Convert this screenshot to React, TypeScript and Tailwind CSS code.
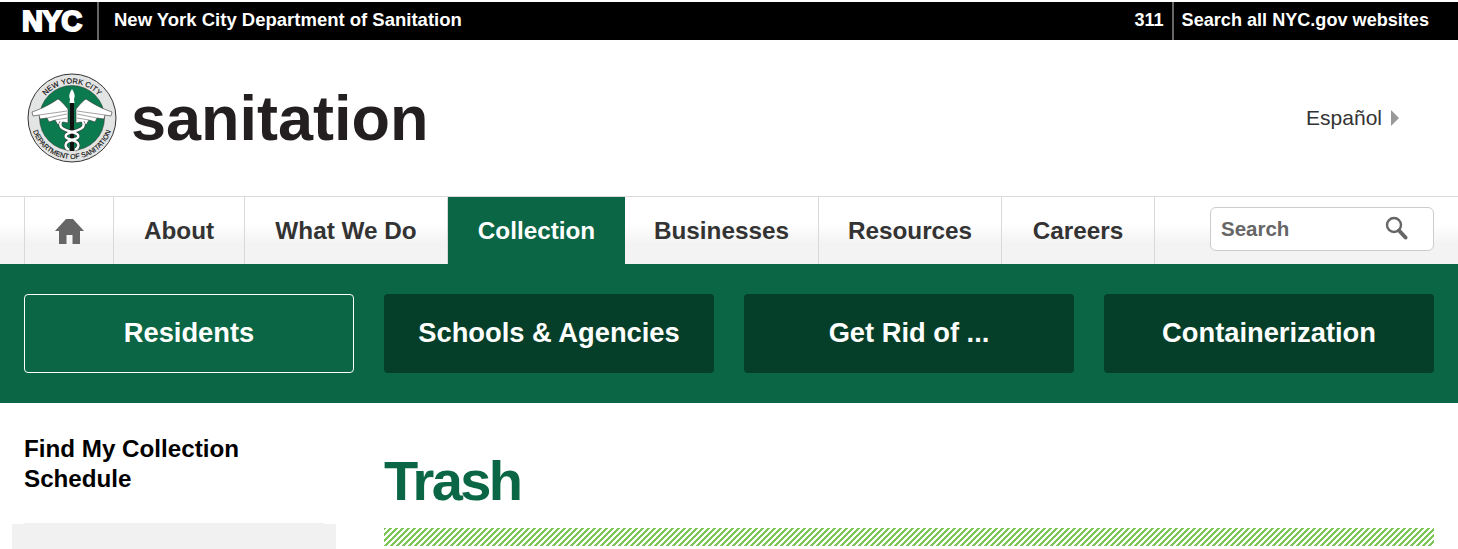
const navItems = [
  { label: "About", width: "w-[131px]" },
  { label: "What We Do", width: "w-[203px]" },
  { label: "Collection", width: "w-[177px]" },
  { label: "Businesses", width: "w-[194px]" },
  { label: "Resources", width: "w-[183px]" },
  { label: "Careers", width: "w-[153px]" },
];
const tiles = ["Residents", "Schools & Agencies", "Get Rid of ...", "Containerization"];

const snakeA = "M34 49 C31 55 38 57 45 59 C53 61 54 65 45 67 C37 69 37 74 42 77";
const snakeB = "M56 49 C59 55 52 57 45 59 C37 61 36 65 45 67 C53 69 53 74 48 77";

const Seal = () => (
  <svg viewBox="0 0 90 90" className="w-[90px] h-[90px] shrink-0" aria-hidden="true">
    <defs>
      <path id="sealTop" d="M 10.5 45 A 34.5 34.5 0 0 1 79.5 45" />
      <path id="sealBottom" d="M 4 45 A 41 41 0 0 0 86 45" />
    </defs>
    <circle cx="45" cy="45" r="44" fill="#e3e4e4" stroke="#333" strokeWidth="1" />
    <circle cx="45" cy="45" r="32.5" fill="#0b7a4f" stroke="#333" strokeWidth="0.5" />
    <text fontFamily="'Liberation Sans', sans-serif" fontSize="7.5" fill="#111" stroke="#111" strokeWidth="0.15">
      <textPath href="#sealTop" startOffset="50%" textAnchor="middle">NEW YORK CITY</textPath>
    </text>
    <text fontFamily="'Liberation Sans', sans-serif" fontSize="7" fill="#111" stroke="#111" strokeWidth="0.15">
      <textPath href="#sealBottom" startOffset="50%" textAnchor="middle">DEPARTMENT OF SANITATION</textPath>
    </text>
    {/* wings */}
    <path d="M41 36 C36 30 33 27 31 26 C24 31 14 36 5 39 L6 43 L12 42 L13 46 L20 45 L22 49 L28 47 L31 52 L36 49 L41 50 Z" fill="#fff" stroke="#333" strokeWidth="0.6" />
    <path d="M49 36 C54 30 57 27 59 26 C66 31 76 36 85 39 L84 43 L78 42 L77 46 L70 45 L68 49 L62 47 L59 52 L54 49 L49 50 Z" fill="#fff" stroke="#333" strokeWidth="0.6" />
    <path d="M12 42 L40 38 M20 45 L40 41 M28 47 L40 45 M78 42 L50 38 M70 45 L50 41 M62 47 L50 45" stroke="#666" strokeWidth="0.6" fill="none" />
    {/* torch */}
    <path d="M45 16 C47.5 20 48.5 23 47 26 L47.5 30 L42.5 30 L43 26 C41.5 23 42.5 20 45 16 Z" fill="#fff" />
    <rect x="43" y="30" width="4" height="48" fill="#111" />
    {/* snakes */}
    <path d={snakeA} fill="none" stroke="#333" strokeWidth="3.4" />
    <path d={snakeB} fill="none" stroke="#333" strokeWidth="3.4" />
    <path d={snakeA} fill="none" stroke="#fff" strokeWidth="2.4" />
    <path d={snakeB} fill="none" stroke="#fff" strokeWidth="2.4" />
  </svg>
);

const HomeIcon = () => (
  <svg viewBox="0 0 29 26" className="w-[29px] h-[26px]" fill="#666" aria-hidden="true">
    <path d="M11 1 L18 1 L29 13 L25 13 L25 26 L17.5 26 L17.5 17 L11.5 17 L11.5 26 L4 26 L4 13 L0 13 Z" />
  </svg>
);

const SearchIcon = () => (
  <svg viewBox="0 0 23 24" className="w-[23px] h-6 -mt-[2px]" fill="none" aria-hidden="true">
    <circle cx="9" cy="9" r="7" stroke="#666" strokeWidth="2.4" />
    <path d="M14 14.5 L20.5 21.5" stroke="#666" strokeWidth="4" strokeLinecap="round" />
  </svg>
);

export default function App() {
  return (
    <div className="h-[549px] overflow-hidden bg-white font-['Liberation_Sans',Arial,sans-serif]">
      {/* city bar */}
      <div className="mt-[2px] h-[38px] bg-black flex items-center justify-between text-white font-bold text-[18.5px] pr-[29px]">
        <div className="flex items-center h-full">
          <span className="w-[97px] pl-[22px] text-[29px] leading-none tracking-[-0.5px] font-bold [-webkit-text-stroke:2px_white]">NYC</span>
          <span className="border-l-2 border-[#666] h-full pl-[15px] pb-[2px] flex items-center">New York City Department of Sanitation</span>
        </div>
        <div className="flex items-center h-full text-[18.1px]">
          <span className="pr-2 pb-[1px]">311</span>
          <span className="border-l-2 border-[#666] h-full pl-2 pb-[1px] flex items-center">Search all NYC.gov websites</span>
        </div>
      </div>

      {/* agency header */}
      <div className="h-[156px] flex items-center justify-between pl-[27px] pr-[59px]">
        <div className="flex items-center gap-[14px]">
          <Seal />
          <span className="text-[63px] leading-none font-bold text-[#231f20]">sanitation</span>
        </div>
        <div className="flex items-center gap-[9px] text-[21px] text-[#333]">
          Español
          <span className="w-0 h-0 border-y-[8px] border-y-transparent border-l-[8px] border-l-[#999]" />
        </div>
      </div>

      {/* main nav */}
      <nav className="h-[68px] border-t border-[#d9d9d9] pl-6 pr-6 flex items-stretch justify-between bg-[linear-gradient(#fff_40%,#f3f3f3_70%)]">
        <ul className="flex items-stretch border-l border-[#d9d9d9]">
          <li className="w-[89px] border-r border-[#d9d9d9] flex items-center justify-center">
            <HomeIcon />
          </li>
          {navItems.map((item) => (
            <li
              key={item.label}
              className={
                item.label === "Collection"
                  ? `${item.width} pt-[1px] flex items-center justify-center text-[24.3px] font-bold bg-[#0b6645] text-white`
                  : `${item.width} pt-[1px] flex items-center justify-center text-[24.3px] font-bold text-[#333] border-r border-[#d9d9d9]`
              }
            >
              {item.label}
            </li>
          ))}
        </ul>
        <div className="self-center -mt-[3px] w-[224px] h-[44px] rounded-md border border-[#ccc] bg-white flex items-center justify-between pl-[10px] pr-[25px]">
          <span className="text-[20.5px] font-bold text-[#666]">Search</span>
          <SearchIcon />
        </div>
      </nav>

      {/* section tiles */}
      <div className="h-[139px] bg-[#0b6645] px-6 py-[30px] grid grid-cols-4 gap-[30px]">
        {tiles.map((tile, i) => (
          <div
            key={tile}
            className={
              i === 0
                ? "rounded flex items-center justify-center text-[27.3px] font-bold text-white border border-white"
                : "rounded flex items-center justify-center text-[27.3px] font-bold text-white bg-[#063f29]"
            }
          >
            {tile}
          </div>
        ))}
      </div>

      {/* body */}
      <div className="flex pr-6">
        <aside className="w-[324px] ml-3 mr-[48px] shrink-0 pt-[31px]">
          <h3 className="pl-3 text-[24.2px] leading-[30px] font-bold text-black">
            Find My Collection
            <br />
            Schedule
          </h3>
          <div className="mt-[29px] mx-3 h-px bg-[#f1f1f1]" />
          <div className="h-[200px] bg-[#f1f1f1]" />
        </aside>
        <main className="flex-1 pt-[45px]">
          <h1 className="text-[56px] leading-[65px] tracking-[-2.6px] font-bold text-[#0b6645]">Trash</h1>
          <div className="mt-[15px] h-[18px] bg-[length:6px_6px] bg-[linear-gradient(135deg,#7cc655_25%,transparent_25%,transparent_50%,#7cc655_50%,#7cc655_75%,transparent_75%)]" />
        </main>
      </div>
    </div>
  );
}
